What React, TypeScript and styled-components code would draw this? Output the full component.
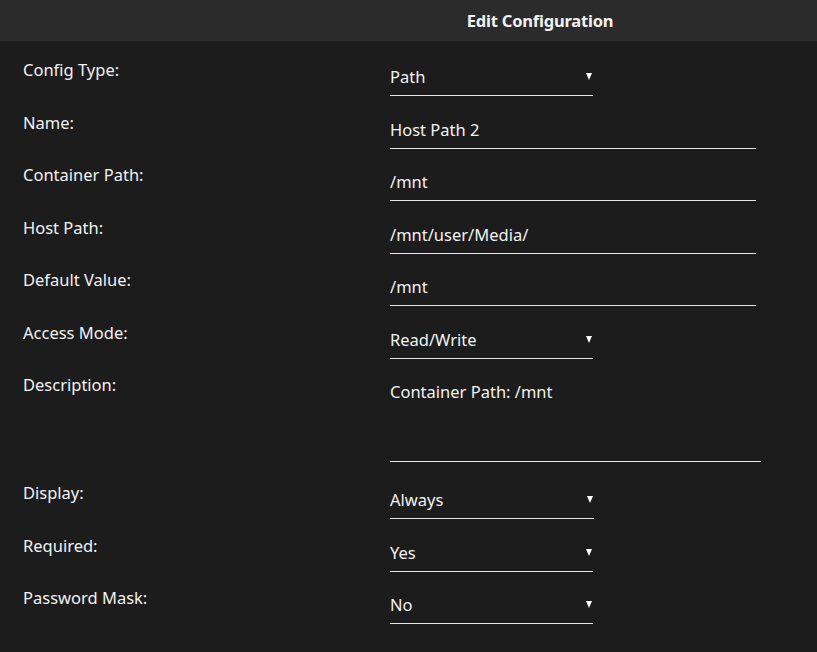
import React from "react";
import styled, { createGlobalStyle } from "styled-components";

const Global = createGlobalStyle`
  html, body { margin: 0; padding: 0; background: #1c1c1c; }
  body { font-family: "Noto Sans", "Open Sans", sans-serif; color: #f2f2f2; }
`;

const Page = styled.div`
  width: 817px;
  height: 652px;
  background: #1c1c1c;
  overflow: hidden;
`;

const Header = styled.div`
  height: 41px;
  background: #2b2b2b;
  display: flex;
  align-items: center;
  justify-content: center;
  padding-left: 263px;
  font-size: 16.5px;
  font-weight: 700;
  color: #f2f2f2;
  letter-spacing: -0.2px;
`;

const Form = styled.div`
  padding-top: 19px;
  display: flex;
  flex-direction: column;
`;

const Row = styled.div<{ $tall?: boolean }>`
  display: grid;
  grid-template-columns: 390px 1fr;
  height: ${(p) => (p.$tall ? "108px" : "52.5px")};
`;

const Label = styled.div`
  padding-left: 23px;
  font-size: 16.5px;
  line-height: 20px;
`;

const Field = styled.div<{ $w: number }>`
  width: ${(p) => p.$w}px;
  margin-top: 7px;
  box-sizing: border-box;
  height: 29px;
  border-bottom: 1px solid #e6e6e6;
  font-size: 16.5px;
  line-height: 20px;
  position: relative;
`;

const Area = styled(Field)`
  height: 80px;
`;

const Arrow = styled.span`
  position: absolute;
  right: 1px;
  top: 6px;
  width: 0;
  height: 0;
  border-left: 3.5px solid transparent;
  border-right: 3.5px solid transparent;
  border-top: 7px solid #fff;
`;

type R = { label: string; value: string; kind: "input" | "select" | "area"; w: number };

const rows: R[] = [
  { label: "Config Type:", value: "Path", kind: "select", w: 203 },
  { label: "Name:", value: "Host Path 2", kind: "input", w: 366 },
  { label: "Container Path:", value: "/mnt", kind: "input", w: 366 },
  { label: "Host Path:", value: "/mnt/user/Media/", kind: "input", w: 366 },
  { label: "Default Value:", value: "/mnt", kind: "input", w: 366 },
  { label: "Access Mode:", value: "Read/Write", kind: "select", w: 203 },
  { label: "Description:", value: "Container Path: /mnt", kind: "area", w: 371 },
  { label: "Display:", value: "Always", kind: "select", w: 204 },
  { label: "Required:", value: "Yes", kind: "select", w: 203 },
  { label: "Password Mask:", value: "No", kind: "select", w: 203 },
];

export default function App() {
  return (
    <Page>
      <Global />
      <Header>Edit Configuration</Header>
      <Form>
        {rows.map((r) => (
          <Row key={r.label} $tall={r.kind === "area"}>
            <Label>{r.label}</Label>
            {r.kind === "area" ? (
              <Area $w={r.w}>{r.value}</Area>
            ) : (
              <Field $w={r.w}>
                {r.value}
                {r.kind === "select" && <Arrow />}
              </Field>
            )}
          </Row>
        ))}
      </Form>
    </Page>
  );
}
